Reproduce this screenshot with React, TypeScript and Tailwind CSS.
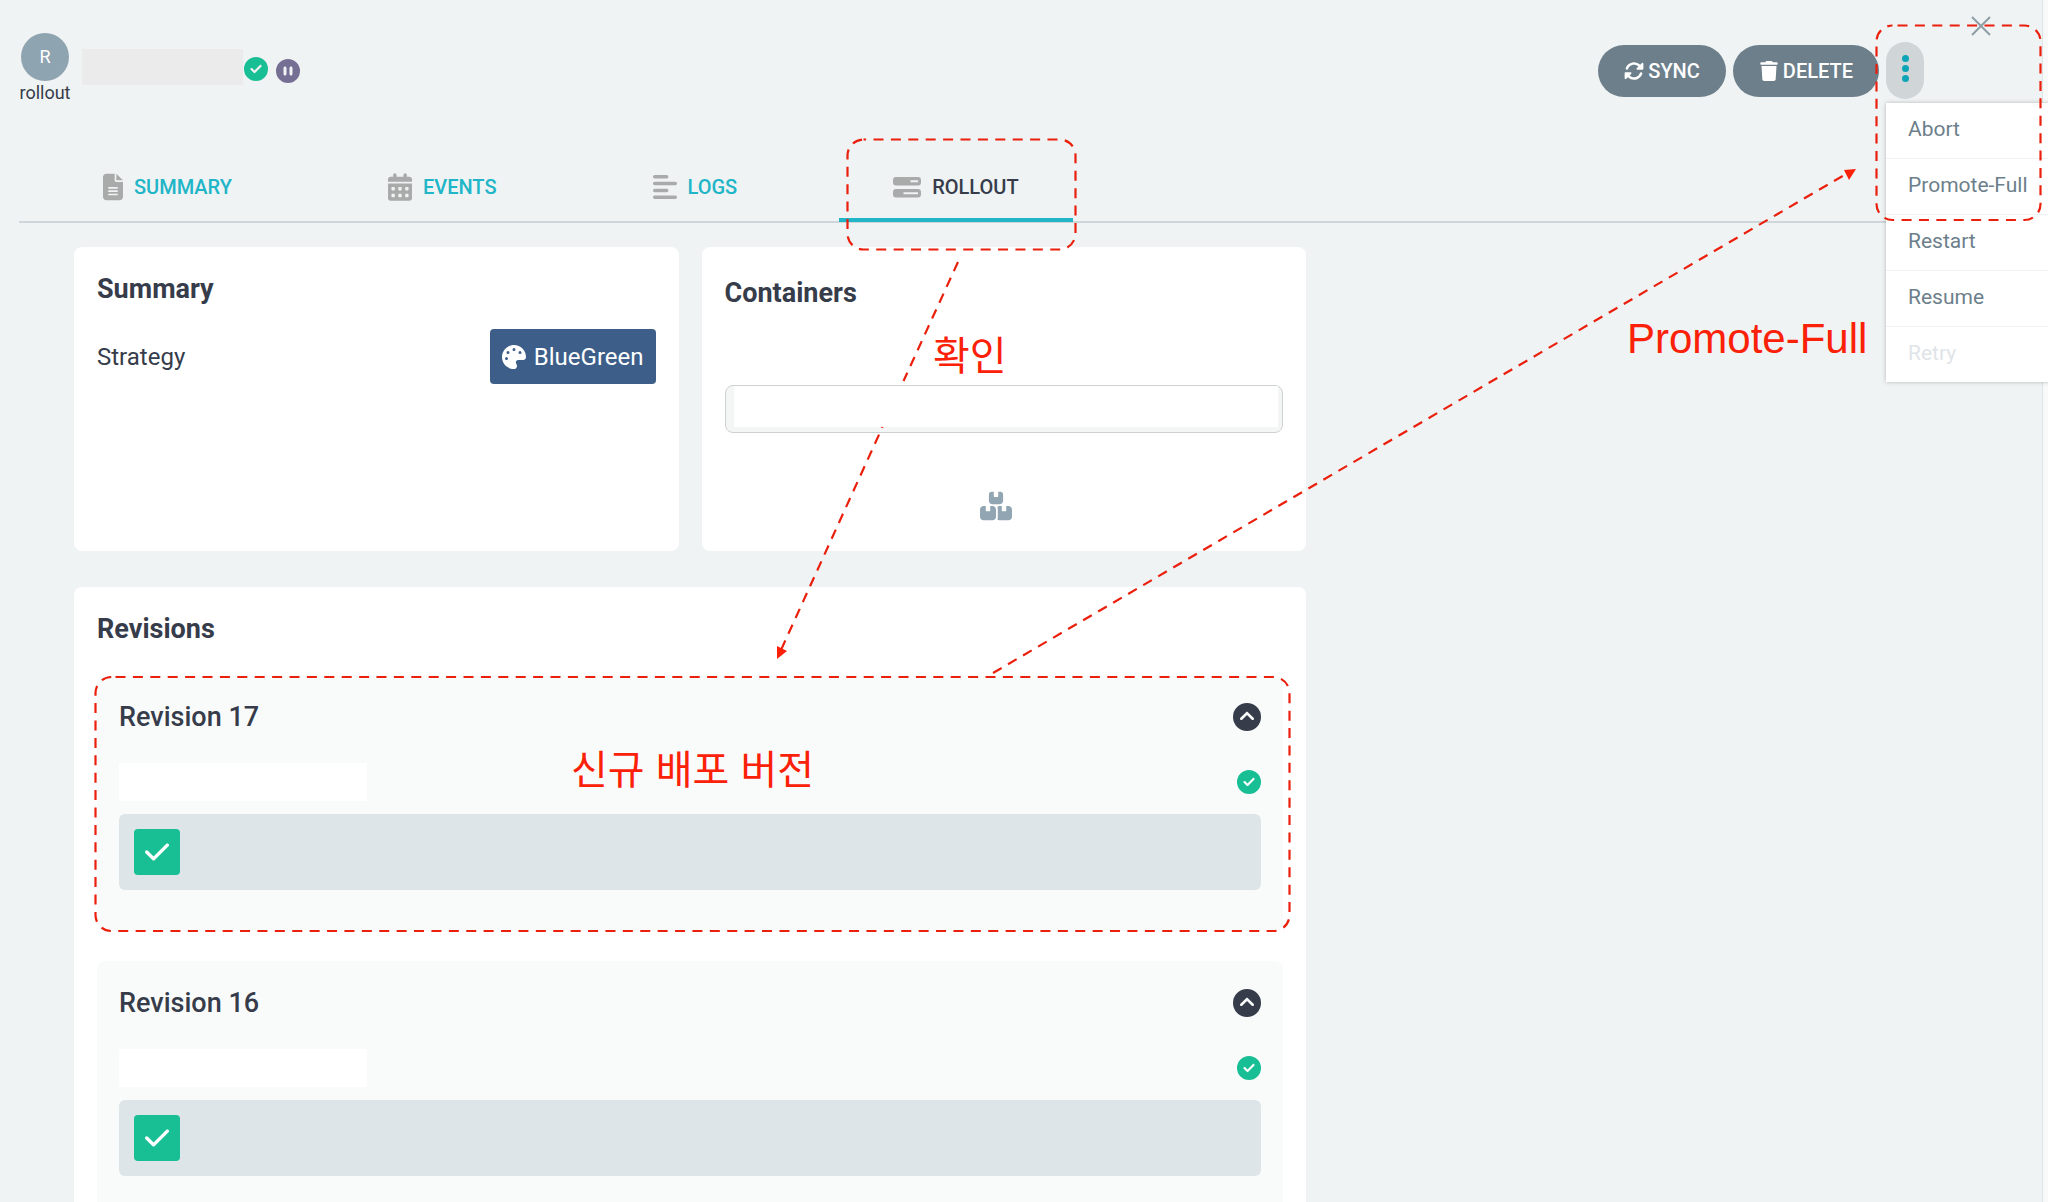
import {
  FaAlignLeft,
  FaBoxesStacked,
  FaCalendarDays,
  FaCheck,
  FaCircleCheck,
  FaCircleChevronUp,
  FaCirclePause,
  FaFileLines,
  FaPalette,
  FaRotate,
  FaTrash,
} from "react-icons/fa6";
import type { IconType } from "react-icons";
import type { ReactNode } from "react";
import clsx from "clsx";

const tabs = [
  { label: "SUMMARY", icon: FaFileLines, iconClass: "h-7 w-5" },
  { label: "EVENTS", icon: FaCalendarDays, iconClass: "h-7 w-6" },
  { label: "LOGS", icon: FaAlignLeft, iconClass: "h-7 w-6" },
  { label: "ROLLOUT", icon: ServerIcon, iconClass: "h-7 w-7", active: true },
];

const actions = [
  { label: "Abort" },
  { label: "Promote-Full" },
  { label: "Restart" },
  { label: "Resume" },
  { label: "Retry", disabled: true },
];

/** Two-row server glyph used by the rollout tab. */
function ServerIcon({ className }: { className?: string }) {
  return (
    <svg viewBox="0 0 28 28" fill="currentColor" className={className} aria-hidden="true">
      <path
        fillRule="evenodd"
        d="M3 4h22a3 3 0 0 1 3 3v2.500a3 3 0 0 1-3 3H3a3 3 0 0 1-3-3V7a3 3 0 0 1 3-3ZM17.5 7.200v2H25v-2ZM3 16h22a3 3 0 0 1 3 3v2.5a3 3 0 0 1-3 3H3a3 3 0 0 1-3-3V19a3 3 0 0 1 3-3ZM10.5 19.200v2H25v-2Z"
      />
    </svg>
  );
}

function ActionButton({ icon: Icon, children }: { icon: IconType; children: ReactNode }) {
  return (
    <button
      type="button"
      className="flex h-[52px] items-center gap-1 rounded-full bg-[#6d7f8b] px-[26px] text-xl font-medium text-white"
    >
      <Icon className="h-5 w-5" />
      {children}
    </button>
  );
}

function Card({ title, className, children }: { title: string; className?: string; children: ReactNode }) {
  return (
    <section className={clsx("rounded-lg bg-white px-[23px]", className)}>
      <h2 className="text-[27px] leading-8 font-bold">{title}</h2>
      {children}
    </section>
  );
}

function Revision({ number }: { number: number }) {
  return (
    <article className="h-64 rounded-lg bg-[#f9fbfb] px-[22px] pt-[26px]">
      <header className="flex h-8 items-center justify-between">
        <h3 className="text-[27px] font-medium">Revision {number}</h3>
        <button type="button" aria-label={`Collapse revision ${number}`}>
          <FaCircleChevronUp className="h-7 w-7 text-[#363c4a]" />
        </button>
      </header>
      <div className="mt-[30px] flex h-[38px] items-center justify-between">
        <div className="h-full w-[248px] bg-white" />
        <FaCircleCheck className="h-6 w-6 text-[#18be94]" />
      </div>
      <div className="mt-[13px] rounded-md bg-[#dde5e8] p-[15px]">
        <div className="flex h-[46px] w-[46px] items-center justify-center rounded bg-[#18be94]">
          <FaCheck className="h-7 w-6 text-white" />
        </div>
      </div>
    </article>
  );
}

/** Red guide boxes, arrows and notes drawn over the page. */
function Annotations() {
  return (
    <svg
      className="pointer-events-none absolute top-0 left-0 h-full w-full"
      fill="none"
      stroke="#ea1f0c"
      strokeWidth="2.2"
      strokeDasharray="10 7.4"
    >
      <rect x="847.5" y="139.5" width="228" height="110" rx="16" strokeDashoffset="-10" />
      <rect x="1876.5" y="25.5" width="164" height="194.5" rx="16" strokeDashoffset="-5" />
      <rect x="95.5" y="677" width="1194" height="254" rx="16" strokeDashoffset="-4" />
      <path d="M958 262 903.5 381" />
      <path d="M882.5 427 781 650" strokeDashoffset="9" />
      <path d="M993 673 1846 174" />
      <g fill="#fb2008" stroke="none">
        <path d="m777 659 0-13 10 5Z" />
        <path d="m1856 169-12 1 5 10Z" />
        <g className="font-['Liberation_Sans','Noto_Sans_CJK_KR',sans-serif]">
          <text x="933" y="370" className="text-[40px]">
            확인
          </text>
          <text x="571" y="784" className="text-[40px]">
            신규 배포 버전
          </text>
          <text x="1627" y="353" className="text-[42px]">
            Promote-Full
          </text>
        </g>
      </g>
    </svg>
  );
}

export default function App() {
  return (
    <div className="relative h-screen overflow-hidden bg-[#f8fafa] font-[Roboto,'Noto_Sans_CJK_KR',sans-serif] text-[#363c4a]">
      <div className="mr-[5px] min-h-screen border-r border-[#dfe5e7] bg-[#eff3f4]">
        <header className="flex items-start justify-between pt-[33px] pl-[19px]">
          <div className="flex">
            <div className="flex w-[52px] flex-col items-center">
              <span className="flex h-12 w-12 items-center justify-center rounded-full bg-[#8fa4b1] text-lg text-white">
                R
              </span>
              <span className="text-lg leading-6">rollout</span>
            </div>
            <div className="mt-4 ml-[11px] flex h-9">
              <div className="h-full w-[161px] bg-[#ebebeb]" />
              <FaCircleCheck className="mt-2 ml-px h-6 w-6 text-[#18be94]" />
              <FaCirclePause className="mt-[10px] ml-2 h-6 w-6 text-[#766f94]" />
            </div>
          </div>
          <div className="mt-[9px] mr-[118px] flex items-center gap-[7px]">
            <ActionButton icon={FaRotate}>SYNC</ActionButton>
            <ActionButton icon={FaTrash}>DELETE</ActionButton>
            <div className="relative">
              <button
                type="button"
                aria-label="More actions"
                className="flex h-[57px] w-[38px] flex-col items-center justify-center gap-[3px] rounded-full bg-[#d0d5d7] pb-1"
              >
                <span className="h-[7px] w-[7px] rounded-full bg-[#0da5b6]" />
                <span className="h-[7px] w-[7px] rounded-full bg-[#0da5b6]" />
                <span className="h-[7px] w-[7px] rounded-full bg-[#0da5b6]" />
              </button>
              <ul className="absolute top-[61px] left-0 w-44 divide-y divide-[#eef2f4] bg-white shadow-[0_0_4px_rgba(0,0,0,0.25)]">
                {actions.map((a) => (
                  <li key={a.label}>
                    <button
                      type="button"
                      disabled={a.disabled}
                      className="h-[55px] w-full pb-0.5 pl-[22px] text-left text-[21px] text-[#6d7f8b] disabled:text-[#dfe4e8]"
                    >
                      {a.label}
                    </button>
                  </li>
                ))}
              </ul>
            </div>
          </div>
        </header>

        <nav className="mt-[51px] ml-[19px] flex gap-12 border-b-2 border-[#cfd6d9] pl-[30px]">
          {tabs.map(({ label, icon: Icon, iconClass, active }) => (
            <a
              key={label}
              href="#"
              className={clsx(
                "-mb-px flex h-[66px] items-center gap-[11px] border-b-4 px-[54px] text-xl font-medium",
                active ? "border-[#20b5c7] text-[#363c4a]" : "border-transparent text-[#20b5c7]",
              )}
            >
              <Icon className={clsx("text-[#a9abab]", iconClass)} />
              {label}
            </a>
          ))}
        </nav>

        <main className="mt-6 ml-[74px] flex max-w-[1232px] flex-col gap-9">
          <div className="flex gap-[23px]">
            <Card title="Summary" className="min-h-[304px] flex-1 pt-[26px]">
              <div className="mt-6 flex items-center justify-between text-2xl">
                <span>Strategy</span>
                <span className="flex h-[55px] items-center gap-2 rounded bg-[#3c5e89] px-3 text-white">
                  <FaPalette className="h-6 w-6" />
                  BlueGreen
                </span>
              </div>
            </Card>
            <Card title="Containers" className="flex-1 pt-[30px]">
              <div className="mt-[76px] rounded-lg border border-[#cdd1d3] bg-[#f4f5f5] pr-1 pb-[5px] pl-2">
                <input
                  type="text"
                  aria-label="Container image"
                  className="block h-[41px] w-full bg-white px-2 text-xl outline-none"
                />
              </div>
              <div className="mt-[57px] flex justify-center pr-4">
                <FaBoxesStacked className="h-8 w-8 text-[#92a5b2]" />
              </div>
            </Card>
          </div>

          <Card title="Revisions" className="pt-[26px]">
            <div className="mt-[30px] flex flex-col gap-[30px]">
              <Revision number={17} />
              <Revision number={16} />
            </div>
          </Card>
        </main>
      </div>

      <button type="button" aria-label="Close" className="absolute top-4 right-[57px] text-[#8f9da5]">
        <svg viewBox="0 0 20 20" className="h-5 w-5" fill="none" stroke="currentColor" strokeWidth="2">
          <path d="m1 1 18 18M19 1 1 19" />
        </svg>
      </button>
      <Annotations />
    </div>
  );
}
